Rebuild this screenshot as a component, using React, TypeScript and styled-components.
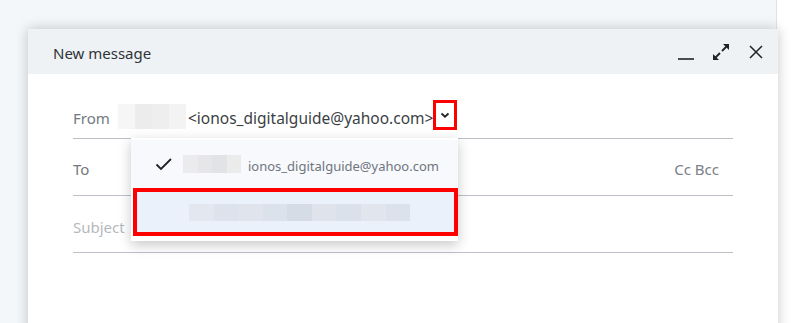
import styled, { createGlobalStyle } from 'styled-components'

const GlobalStyle = createGlobalStyle`
  html, body {
    margin: 0;
    padding: 0;
    background: #ffffff;
    font-family: "Noto Sans", "Open Sans", Arial, sans-serif;
    overflow: hidden;
  }
`

const Page = styled.div`
  display: flex;
  height: 100vh;
  background: #ffffff;
`

const Backdrop = styled.div`
  width: 777px;
  flex-shrink: 0;
  background: #f4f7fa;
  border-right: 1px solid #dfe3e8;
  padding: 29px 0 0 28px;
  box-sizing: border-box;
  position: relative;
  z-index: 1;
`

const Dialog = styled.div`
  width: 750px;
  height: 400px;
  background: #ffffff;
  box-shadow: 0 0 12px rgba(0, 0, 0, 0.22);
  display: flex;
  flex-direction: column;
`

const Header = styled.div`
  height: 45px;
  background: #eef2f5;
  display: flex;
  align-items: center;
  justify-content: space-between;
  padding: 0 10px 0 25px;
  flex-shrink: 0;
`

const Title = styled.div`
  font-size: 15px;
  color: #303438;
  padding-top: 2px;
`

const HeaderActions = styled.div`
  display: flex;
  align-items: center;
  gap: 11px;
`

const IconButton = styled.button`
  width: 24px;
  height: 24px;
  padding: 0;
  border: none;
  background: transparent;
  display: flex;
  align-items: center;
  justify-content: center;
  color: #1f2326;
  cursor: pointer;
`

const Body = styled.div`
  padding: 20px 45px 0 45px;
`

const Row = styled.div<{ $h: number }>`
  position: relative;
  height: ${p => p.$h}px;
  border-bottom: 1px solid #bcc1c8;
  display: flex;
  align-items: center;
  font-size: 15px;
`

const Label = styled.span<{ $muted?: boolean }>`
  color: ${p => (p.$muted ? '#b5b9be' : '#727880')};
  width: 45px;
  flex-shrink: 0;
  padding-top: ${p => (p.$muted ? '6px' : '4px')};
`

const Sender = styled.span`
  color: #3b3f44;
  font-size: 15.5px;
  margin-left: 2px;
  padding-top: 4px;
`

const ChevronBox = styled.span`
  width: 18px;
  height: 24px;
  border: 3px solid #ff0000;
  display: inline-flex;
  align-items: center;
  justify-content: center;
  margin-top: -2px;
  color: #1f2326;
`

const CcBcc = styled.span`
  margin-left: auto;
  margin-right: 14px;
  color: #7a8088;
  padding-top: 4px;
`

const Blur = styled.span<{ $w: number; $h: number }>`
  display: inline-flex;
  width: ${p => p.$w}px;
  height: ${p => p.$h}px;
  flex-shrink: 0;
`

const Cell = styled.span`
  flex: 1;
  height: 100%;
`

const Menu = styled.div`
  position: absolute;
  left: 58px;
  top: 44px;
  width: 327px;
  background: #ffffff;
  box-shadow: 0 4px 12px rgba(0, 0, 0, 0.22);
  z-index: 5;
  padding-bottom: 5px;
`

const MenuItem = styled.div<{ $selected?: boolean }>`
  height: 48px;
  display: flex;
  align-items: center;
  box-sizing: border-box;
  font-size: 13px;
  color: #70757c;
  background: ${p => (p.$selected ? '#ebf1fb' : '#f7f9fd')};
  border: ${p => (p.$selected ? '4px solid #ff0000' : 'none')};
  margin: ${p => (p.$selected ? '0 0 0 2px' : '2px 0 0 0')};
  padding-left: ${p => (p.$selected ? '52px' : '24px')};
`

const Check = styled.span`
  width: 18px;
  display: inline-flex;
  margin-right: 10px;
  color: #1f2326;
`

const ItemEmail = styled.span`
  margin-left: 7px;
  padding-top: 3px;
`

function Pixels({ w, h, colors }: { w: number; h: number; colors: string[] }) {
  return (
    <Blur $w={w} $h={h}>
      {colors.map((c, i) => (
        <Cell key={i} style={{ background: c }} />
      ))}
    </Blur>
  )
}

function App() {
  return (
    <Page>
      <GlobalStyle />
      <Backdrop>
        <Dialog>
          <Header>
            <Title>New message</Title>
            <HeaderActions>
              <IconButton aria-label="minimize">
                <svg width="18" height="18" viewBox="0 0 18 18">
                  <path d="M1 16h16" stroke="currentColor" strokeWidth="1.6" />
                </svg>
              </IconButton>
              <IconButton aria-label="maximize">
                <svg width="18" height="18" viewBox="0 0 18 18">
                  <path d="M10 8l6-6" stroke="currentColor" strokeWidth="1.8" />
                  <path d="M8 10l-6 6" stroke="currentColor" strokeWidth="1.8" />
                  <path d="M1 11v6h6z" fill="currentColor" />
                  <path d="M17 1v6l-6-6z" fill="currentColor" />
                </svg>
              </IconButton>
              <IconButton aria-label="close">
                <svg width="16" height="16" viewBox="0 0 16 16">
                  <path d="M2 2l12 12M14 2L2 14" stroke="currentColor" strokeWidth="1.5" />
                </svg>
              </IconButton>
            </HeaderActions>
          </Header>
          <Body>
            <Row $h={44}>
              <Label>From</Label>
              <Pixels w={68} h={25} colors={['#f6f6f6', '#ececec', '#eeeeee', '#f3f3f3']} />
              <Sender>&lt;ionos_digitalguide@yahoo.com&gt;</Sender>
              <ChevronBox>
                <svg width="10" height="8" viewBox="0 0 10 8">
                  <path d="M1.5 2.5l3.5 3.2 3.5-3.2" stroke="currentColor" strokeWidth="1.8" fill="none" />
                </svg>
              </ChevronBox>
              <Menu>
                <MenuItem>
                  <Check>
                    <svg width="18" height="14" viewBox="0 0 18 14">
                      <path d="M1.5 7.5l4.5 4.5 10-10" stroke="currentColor" strokeWidth="1.8" fill="none" />
                    </svg>
                  </Check>
                  <Pixels w={58} h={18} colors={['#ebebed', '#e6e6e8', '#e2e3e6', '#ebebec']} />
                  <ItemEmail>ionos_digitalguide@yahoo.com</ItemEmail>
                </MenuItem>
                <MenuItem $selected>
                  <Pixels
                    w={221}
                    h={17}
                    colors={['#e3e8f0', '#dde3ec', '#dfe4ed', '#dce2eb', '#d5dce6', '#dee3ec', '#dbe1ea', '#e0e5ee', '#dce2eb']}
                  />
                </MenuItem>
              </Menu>
            </Row>
            <Row $h={56}>
              <Label>To</Label>
              <CcBcc>Cc Bcc</CcBcc>
            </Row>
            <Row $h={56}>
              <Label $muted>Subject</Label>
            </Row>
          </Body>
        </Dialog>
      </Backdrop>
    </Page>
  )
}

export default App
